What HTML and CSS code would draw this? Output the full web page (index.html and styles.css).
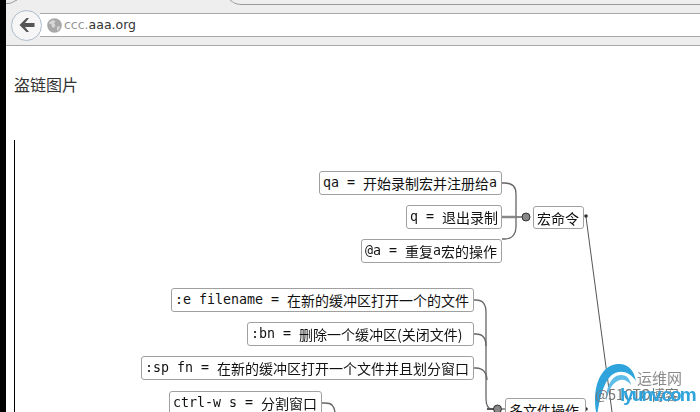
FILE: index.html
```html
<!DOCTYPE html>
<html lang="zh">
<head>
<meta charset="utf-8">
<title>盗链图片</title>
<link rel="stylesheet" href="styles.css">
</head>
<body>
<div class="strip"></div>
<div class="window">
  <header class="toolbar">
    <svg class="tabline" width="694" height="6" viewBox="0 0 694 6"><path d="M0 3.500H2C6 3.500 8 1 11 0M224 0C227 2.500 230 4.500 236 4.500H694" fill="none" stroke="#999" stroke-width="1"/></svg>
    <div class="nav">
      <button class="back" type="button" aria-label="Back">
        <svg width="18" height="16" viewBox="0 0 18 16"><path d="M8.500 1 1.500 8l7 7h2.500l-4-5h9.500V6H7l4-5z" fill="#555"/></svg>
      </button>
      <div class="urlbar">
        <svg class="globe" width="15" height="15" viewBox="0 0 15 15"><circle cx="7.500" cy="7.500" r="7.300" fill="#a8a8a8"/><path d="M3 3.500 6.500 2l2 1.500-1.500 2L8.500 7 7 10 5 9 4.500 6.500 2 5.500zM10 9l3-1-1 3.500L10 13z" fill="#d6d6d6"/></svg>
        <span class="url"><span class="sub">ccc.</span>aaa.org</span>
      </div>
    </div>
  </header>
  <main class="page">
    <p class="title">盗链图片</p>
    <div class="map">
      <svg class="links" width="694" height="366" viewBox="0 0 694 366">
        <g fill="none" stroke="#666" stroke-width="1.300">
          <path d="M496 137h3c7 0 11 4 11 11v33c0 7-4 12-11 12h-3"/>
          <path d="M510 171h10M528 171h6"/>
          <path d="M468 254h2c7 0 10 5 10 12v86c0 7 2 11 6 11"/>
          <path d="M468 288h2c7 0 10 5 10 12"/>
          <path d="M468 322h2c7 0 11 5 11 12"/>
          <path d="M316 357h3c7 0 9 3 10 9"/>
          <path d="M496 363h4"/>
          <path d="M580 171 606 366" stroke="#555" stroke-width="1"/>
        </g>
        <path d="M496 171h14" stroke="#888" stroke-width="2.500"/>
        <path d="M481 363h8" stroke="#555" stroke-width="2"/>
        <circle cx="520" cy="171" r="4" fill="#888" stroke="#333"/>
        <circle cx="491.500" cy="363" r="4" fill="#888" stroke="#333"/>
        <circle cx="580" cy="170" r="1.800" fill="#333"/>
        <circle cx="580" cy="363" r="1.800" fill="#333"/>
      </svg>

      <div class="node n-qa"><span>qa = </span><b>开始录制宏并注册给</b><span>a</span></div>
      <div class="node n-q"><span>q = </span><b>退出录制</b></div>
      <div class="node n-at"><span>@a = </span><b>重复</b><span>a</span><b>宏的操作</b></div>
      <div class="node n-macro"><b>宏命令</b></div>
      <div class="node n-e"><span>:e filename = </span><b>在新的缓冲区打开一个的文件</b></div>
      <div class="node n-bn"><span>:bn = </span><b>删除一个缓冲区(关闭文件)</b></div>
      <div class="node n-sp"><span>:sp fn = </span><b>在新的缓冲区打开一个文件并且划分窗口</b></div>
      <div class="node n-ctrl"><span>ctrl-w s = </span><b>分割窗口</b></div>
      <div class="node n-multi"><b>多文件操作</b></div>

      <div class="mark">
        <svg class="swirl" width="50" height="56" viewBox="0 0 50 56">
          <path d="M3 54C-3 28 5 3 23 1c11-1 17 6 19 17C36 9 28 7 21 10 12 14 6 30 3 54z" fill="#2ea3dc"/>
          <path d="M12 38c0-15 6-26 15-26 6 0 9 4 10 10-3-4-7-6-11-5-7 2-11 9-14 21z" fill="#5fbde8"/>
        </svg>
        <span class="mark-a">运维网</span>
        <span class="mark-b">@51CTO博客</span>
        <span class="mark-c">lyunv.com</span>
      </div>
    </div>
  </main>
</div>
</body>
</html>
```
FILE: styles.css
```css
* { box-sizing: border-box; }
html, body { margin: 0; height: 100%; overflow: hidden; }
body { display: flex; background: #000; }
.strip { width: 6px; flex: none; background: #000; }
.window { flex: 1; min-width: 0; display: flex; flex-direction: column; background: #fff; }

.toolbar {
  position: relative;
  height: 46px;
  flex: none;
  background: #eeeeee;
  border-bottom: 1px solid #a8a8a8;
}
.tabline { position: absolute; left: 0; top: 0; }
.nav { display: flex; align-items: center; height: 45px; padding: 5px 0 0 5px; }
.back {
  position: relative;
  z-index: 1;
  width: 31px;
  height: 31px;
  flex: none;
  padding: 0;
  display: flex;
  align-items: center;
  justify-content: center;
  border: 1px solid #aebccb;
  border-radius: 50%;
  background: #f6f6f6;
}
.urlbar {
  flex: 1;
  height: 24px;
  margin-left: -2px;
  display: flex;
  align-items: center;
  gap: 2px;
  padding-left: 7px;
  background: #fff;
  border-top: 1px solid #a8a8a8;
  border-bottom: 1px solid #a8a8a8;
}
.globe { flex: none; }
.url { font: 12.500px/20px "DejaVu Sans", sans-serif; color: #333; }
.sub { color: #999; }

.page { position: relative; flex: 1; min-height: 0; overflow: hidden; }
.title {
  margin: 0;
  padding: 28px 0 0 8px;
  font: 16px/20px "Noto Sans CJK SC", sans-serif;
  color: #333;
}
.map { position: absolute; left: 0; top: 0; width: 694px; height: 366px; filter: blur(.3px); }
.map::before { content: ""; position: absolute; left: 8px; top: 94px; bottom: 0; width: 1px; background: #000; }
.links { position: absolute; left: 0; top: 0; }

.node {
  position: absolute;
  height: 24px;
  display: flex;
  align-items: center;
  padding: 0 3px;
  background: #fff;
  border: 1px solid #a0a0a0;
  border-radius: 3px;
  white-space: pre;
  color: #111;
  font: 13.300px/20px "DejaVu Sans Mono", monospace;
}
.node b { font: 400 14px/20px "Noto Sans CJK SC", sans-serif; }
.n-qa { left: 313px; top: 125px; width: 183px; }
.n-q { left: 400px; top: 159px; width: 96px; }
.n-at { left: 355px; top: 193px; width: 141px; }
.n-macro { left: 527px; top: 160px; width: 51px; height: 23px; }
.n-e { left: 165px; top: 242px; width: 303px; }
.n-bn { left: 241px; top: 276px; width: 227px; }
.n-sp { left: 135px; top: 310px; width: 333px; }
.n-ctrl { left: 163px; top: 345px; width: 153px; }
.n-multi { left: 499px; top: 352px; width: 81px; }

.mark { position: absolute; left: 588px; top: 315px; width: 106px; height: 51px; }
.swirl { position: absolute; left: 0; top: 2px; }
.mark-a { position: absolute; left: 43px; top: 8px; font: 15px/18px "Noto Sans CJK SC", sans-serif; color: #8a8a8a; }
.mark-b { position: absolute; left: 1px; top: 24px; font: 14px/18px "Noto Sans CJK SC", sans-serif; color: #777; white-space: nowrap; }
.mark-c { position: absolute; left: 26px; top: 24px; font: 700 19px/20px "Liberation Sans", sans-serif; letter-spacing: -2px; color: #2ea3dc; white-space: nowrap; }
```
